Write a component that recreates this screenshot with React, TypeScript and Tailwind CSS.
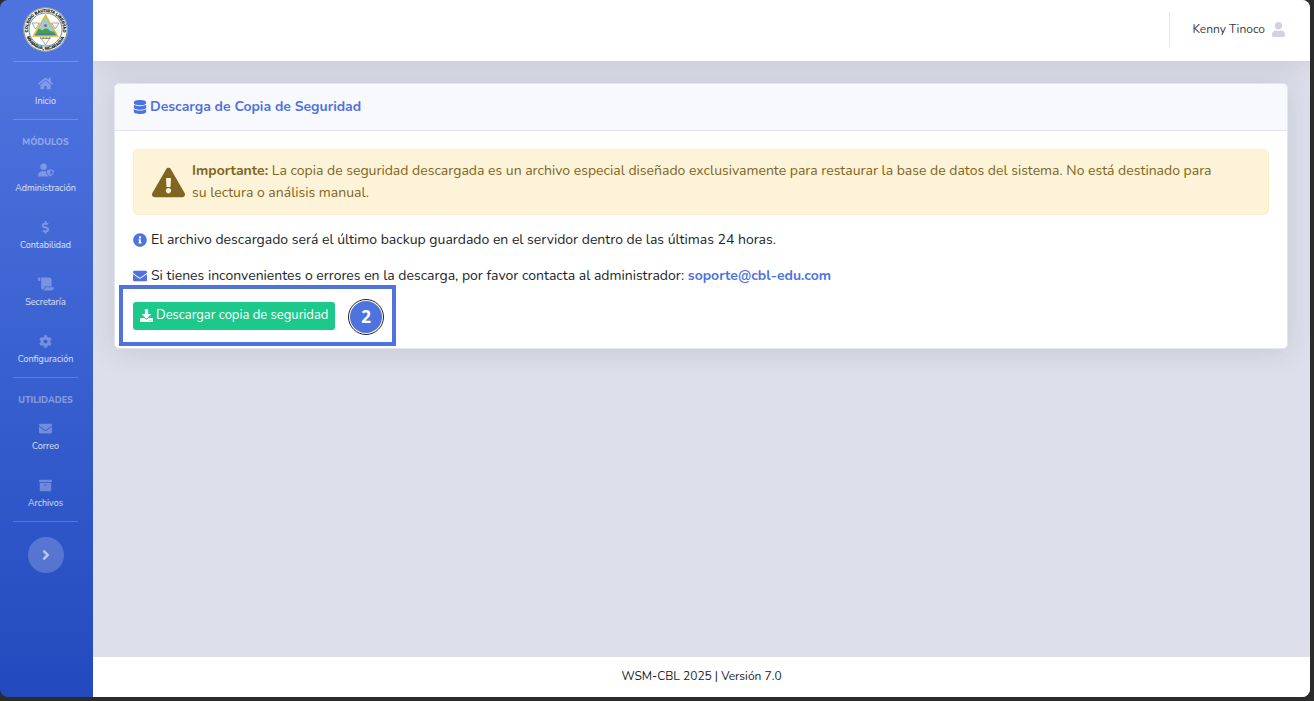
import type { ReactNode } from "react";
import { FaHome, FaDollarSign, FaScroll, FaCog, FaEnvelope, FaArchive, FaAngleRight, FaDatabase, FaExclamationTriangle, FaInfoCircle, FaDownload, FaUser } from "react-icons/fa";
import { FaUserShield } from "react-icons/fa6";

function Crest() {
  return (
    <svg viewBox="0 0 90 90" className="h-[45px] w-[45px]" role="img" aria-label="Escudo del colegio">
      <defs>
        <path id="crest-top" d="M 12.6 58.8 A 35.200 35.200 0 1 1 77.400 58.800" />
        <path id="crest-bottom" d="M 7.8 60.500 A 40.300 40.300 0 0 0 82.200 60.500" />
        <clipPath id="crest-scene">
          <path d="M45 17 L69 58 H21 Z" />
        </clipPath>
      </defs>
      <circle cx="45" cy="45" r="44.500" fill="#f7f9f4" />
      <circle cx="45" cy="45" r="43.500" fill="none" stroke="#3f6b62" strokeWidth="1.500" />
      <circle cx="45" cy="45" r="33" fill="#fff" stroke="#3f6b62" strokeWidth="1.500" />
      <text fontSize="8" fontWeight="700" fill="#111" stroke="#111" strokeWidth="0.400" fontFamily="Liberation Sans, sans-serif">
        <textPath href="#crest-top" startOffset="50%" textAnchor="middle">COLEGIO BAUTISTA LIBERTAD</textPath>
      </text>
      <text fontSize="8" fontWeight="700" fill="#111" stroke="#111" strokeWidth="0.400" fontFamily="Liberation Sans, sans-serif">
        <textPath href="#crest-bottom" startOffset="50%" textAnchor="middle">MANAGUA, NICARAGUA</textPath>
      </text>
      <path d="M18 32 H33 L25.500 44 Z M57 32 H72 L64.500 44 Z M37 63 H53 L45 76 Z" fill="#fff" stroke="#888" strokeWidth="1.500" />
      <g clipPath="url(#crest-scene)">
        <rect x="20" y="15" width="50" height="45" fill="#8fd0ee" />
        <path d="M20 50 Q30 38 38 47 Q47 39 54 48 L70 51 V60 H20 Z" fill="#4c9e3d" />
        <path d="M22 55 Q42 51 68 55 V58 H22 Z" fill="#2f7fc4" />
        <circle cx="45" cy="37" r="3" fill="#d54c4c" />
      </g>
      <path d="M45 17 L69 58 H21 Z" fill="none" stroke="#e5b72f" strokeWidth="3" />
      <path d="M34 62 H56" stroke="#555" strokeWidth="2" strokeDasharray="2 1" />
    </svg>
  );
}

function NavItem({ icon, label }: { icon: ReactNode; label: string }) {
  return (
    <li>
      <a href="#" className="flex flex-col items-center gap-1 pt-[14px] pb-[11px] text-[9px] leading-[14px] text-white/80">
        <span className="flex h-[14px] items-center text-[13px] text-white/30">{icon}</span>
        {label}
      </a>
    </li>
  );
}

function Divider() {
  return <hr className="mx-[13px] border-white/20" />;
}

function Heading({ children }: { children: ReactNode }) {
  return <h2 className="pt-4 pb-px text-center text-[9px] leading-3 font-extrabold text-white/40">{children}</h2>;
}

function Sidebar() {
  return (
    <nav className="w-[93px] shrink-0 rounded-l-lg bg-linear-to-b from-[#4e73df] from-10% to-[#224abe] pr-[2px]">
      <a href="#" className="flex h-[61px] items-center justify-center pb-[2px]">
        <Crest />
      </a>
      <Divider />
      <ul>
        <NavItem icon={<FaHome className="text-[15px]" />} label="Inicio" />
      </ul>
      <Divider />
      <Heading>MÓDULOS</Heading>
      <ul>
        <NavItem icon={<FaUserShield className="text-base" />} label="Administración" />
        <NavItem icon={<FaDollarSign />} label="Contabilidad" />
        <NavItem icon={<FaScroll className="text-base" />} label="Secretaría" />
        <NavItem icon={<FaCog />} label="Configuración" />
      </ul>
      <Divider />
      <Heading>UTILIDADES</Heading>
      <ul>
        <NavItem icon={<FaEnvelope />} label="Correo" />
        <NavItem icon={<FaArchive />} label="Archivos" />
      </ul>
      <Divider />
      <button type="button" aria-label="Expandir menú" className="mx-auto mt-[15px] flex h-9 w-9 items-center justify-center rounded-full bg-white/20 text-[16px] text-white/60">
        <FaAngleRight />
      </button>
    </nav>
  );
}

export default function App() {
  return (
    <div className="flex min-h-screen bg-[#2b2b2b] pr-1 pb-1 font-['Nunito','Lato',sans-serif] text-[14px] leading-[22px] text-[#212529]">
      <Sidebar />
      <div className="flex min-w-0 flex-1 flex-col overflow-hidden rounded-r-lg bg-[#dddfeb]">
        <header className="flex h-[61px] items-center justify-end bg-white pr-6 pb-[3px] shadow-[0_2px_28px_rgba(58,59,69,0.15)]">
          <div className="mr-[23px] h-[35px] w-px bg-[#e3e6f0]" />
          <button type="button" className="flex items-center gap-[6px] text-[12px] text-[#3a3b45]">
            Kenny Tinoco
            <FaUser className="text-[15px] text-[#d1d3e2]" />
          </button>
        </header>
        <main className="flex-1 px-[22px] pt-[22px] pl-[21px]">
          <section className="rounded-[5px] border border-[#e3e6f0] bg-white shadow-[0_2px_28px_rgba(58,59,69,0.15)]">
            <h1 className="flex items-center gap-[3px] rounded-t-[5px] border-b border-[#e3e6f0] bg-[#f8f9fc] px-[18px] py-3 font-bold text-[#4e73df]">
              <FaDatabase className="text-[14px]" />
              Descarga de Copia de Seguridad
            </h1>
            <div className="px-[18px] pt-[18px] pb-[18px]">
              <div role="alert" className="flex items-center gap-[7px] rounded-[5px] border border-[#fceec9] bg-[#fdf3d8] py-[10px] pr-12 pl-[18px] text-[#806520]">
                <FaExclamationTriangle className="shrink-0 text-[33px]" />
                <p>
                  <strong>Importante:</strong> La copia de seguridad descargada es un archivo especial diseñado exclusivamente para restaurar la base de datos del sistema. No está destinado para su lectura o análisis manual.
                </p>
              </div>
              <p className="mt-[14px] flex items-center gap-1">
                <FaInfoCircle className="text-[14px] text-[#4e73df]" />
                El archivo descargado será el último backup guardado en el servidor dentro de las últimas 24 horas.
              </p>
              <p className="mt-[14px] flex items-center gap-1">
                <FaEnvelope className="text-[14px] text-[#4e73df]" />
                <span>
                  Si tienes inconvenientes o errores en la descarga, por favor contacta al administrador:{" "}
                  <a href="mailto:soporte@cbl-edu.com" className="font-bold text-[#4e73df]">soporte@cbl-edu.com</a>
                </span>
              </p>
              <div className="relative mt-[15px] w-fit">
                <button type="button" className="flex h-7 items-center gap-[3px] rounded-[3px] bg-[#1cc88a] px-[7px] pb-[2px] text-[13px] text-white">
                  <FaDownload />
                  Descargar copia de seguridad
                </button>
                <div className="pointer-events-none absolute -top-[17px] -left-[14px] flex h-[61px] w-[277px] items-center justify-end border-4 border-[#4e73df] pt-[2px] pr-2">
                  <span className="flex h-9 w-9 items-center justify-center rounded-full border border-[#222] bg-white p-px">
                    <span className="flex h-full w-full items-center justify-center rounded-full bg-[#4e73df] font-['Open_Sans',sans-serif] text-[17px] font-bold text-white">2</span>
                  </span>
                </div>
              </div>
            </div>
          </section>
        </main>
        <footer className="flex h-10 items-center justify-center bg-white pb-[2px] text-[12px]">WSM-CBL 2025 | Versión 7.0</footer>
      </div>
    </div>
  );
}
